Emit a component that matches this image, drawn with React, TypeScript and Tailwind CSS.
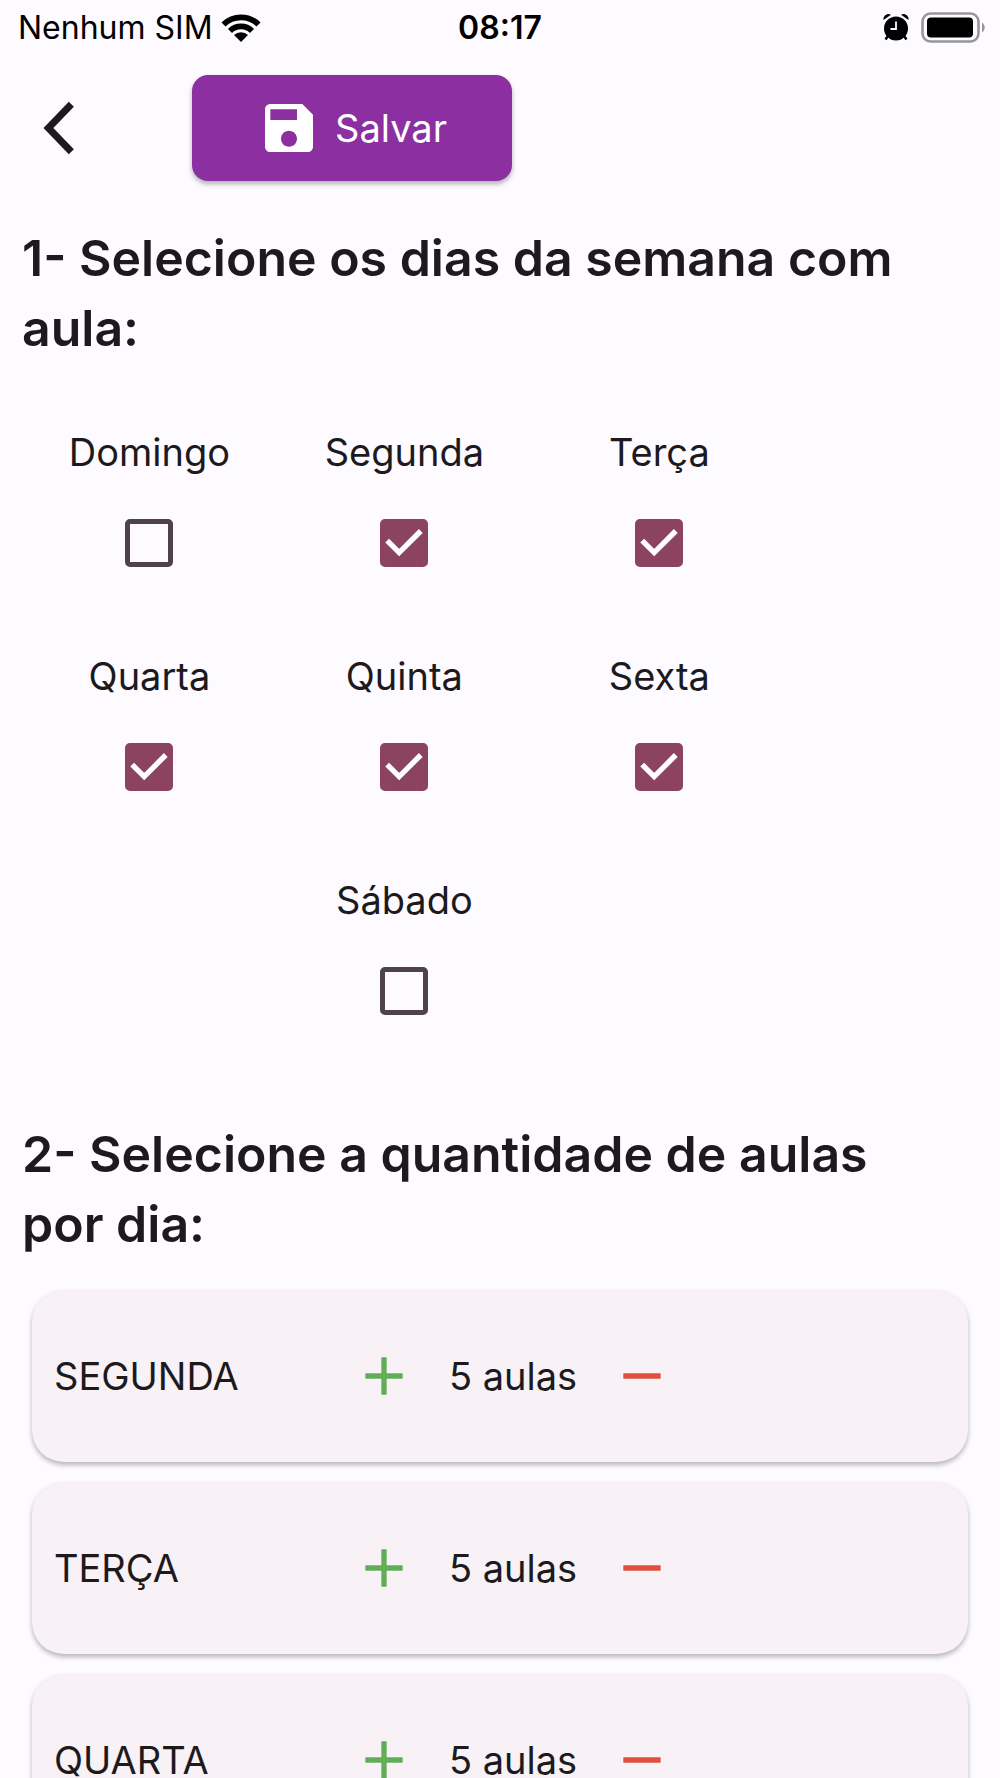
import React, { useState } from "react";

interface Day {
  name: string;
  selected: boolean;
  classes: number;
}

const initialDays: Day[] = [
  { name: "Domingo", selected: false, classes: 5 },
  { name: "Segunda", selected: true, classes: 5 },
  { name: "Terça", selected: true, classes: 5 },
  { name: "Quarta", selected: true, classes: 5 },
  { name: "Quinta", selected: true, classes: 5 },
  { name: "Sexta", selected: true, classes: 5 },
  { name: "Sábado", selected: false, classes: 5 },
];

export default function App() {
  const [days, setDays] = useState(initialDays);

  const update = (name: string, patch: Partial<Day>) =>
    setDays(days.map((d) => (d.name === name ? { ...d, ...patch } : d)));

  return (
    <div className="flex h-screen flex-col overflow-hidden bg-[#fdfbff] font-['Inter',sans-serif] text-[#1c1a1c]">
      <StatusBar />

      <header className="flex items-center gap-[100px] px-7 pt-[22px] pb-[22px]">
        <button type="button" aria-label="Voltar" className="h-16 w-16">
          <svg viewBox="0 0 24 24" className="h-16 w-16" fill="currentColor">
            <path d="M17.2 4 15.3 2.2 5.8 12l9.5 9.8 1.9-1.8L9.5 12z" />
          </svg>
        </button>
        <button
          type="button"
          className="flex h-[106px] w-80 items-center justify-center gap-3.5 rounded-2xl bg-[#8c2fa1] text-[38px] text-white shadow-[0_3px_5px_rgba(0,0,0,0.3)]"
        >
          <svg viewBox="0 0 24 24" className="h-16 w-16" fill="currentColor">
            <path d="M17 3H5c-1.11 0-2 .9-2 2v14c0 1.1.89 2 2 2h14c1.1 0 2-.9 2-2V7l-4-4zm-5 16c-1.66 0-3-1.34-3-3s1.34-3 3-3 3 1.34 3 3-1.34 3-3 3zm3-10H5V5h10v4z" />
          </svg>
          Salvar
        </button>
      </header>

      <main className="flex-1 overflow-y-auto px-[22px] pt-5 [scrollbar-width:none]">
        <SectionTitle>1- Selecione os dias da semana com aula:</SectionTitle>

        <div className="grid w-4/5 grid-cols-3 pt-12">
          {days.map((day) => (
            <DayCheckbox
              key={day.name}
              day={day}
              onToggle={() => update(day.name, { selected: !day.selected })}
            />
          ))}
        </div>

        <div className="pt-9">
          <SectionTitle>2- Selecione a quantidade de aulas por dia:</SectionTitle>
        </div>

        <ul className="flex flex-col gap-5 px-2.5 pt-[31px] pb-8">
          {days
            .filter((day) => day.selected)
            .map((day) => (
              <ClassCounter
                key={day.name}
                day={day}
                onChange={(classes) => update(day.name, { classes })}
              />
            ))}
        </ul>
      </main>
    </div>
  );
}

function SectionTitle({ children }: { children: React.ReactNode }) {
  return <h2 className="pr-8 text-[50px] leading-[70px] font-semibold">{children}</h2>;
}

function DayCheckbox({ day, onToggle }: { day: Day; onToggle: () => void }) {
  return (
    // the last day sits alone in the middle column
    <label className="flex h-56 flex-col items-center gap-11 pt-[18px] last:col-start-2">
      <span className="text-[38px] leading-[46px]">{day.name}</span>
      <span className="grid">
        <input
          type="checkbox"
          checked={day.selected}
          onChange={onToggle}
          className="peer col-start-1 row-start-1 h-12 w-12 appearance-none rounded-[5px] border-[5px] border-[#4f4348] checked:border-[#8c435f] checked:bg-[#8c435f]"
        />
        <svg
          viewBox="0 0 18 18"
          className="pointer-events-none invisible col-start-1 row-start-1 h-12 w-12 peer-checked:visible"
          fill="none"
          stroke="white"
          strokeWidth="2"
        >
          <path d="M2.7 8.1 7.2 12.6 15.3 4.5" />
        </svg>
      </span>
    </label>
  );
}

function ClassCounter({ day, onChange }: { day: Day; onChange: (classes: number) => void }) {
  return (
    <li className="flex h-[172px] shrink-0 items-center rounded-[32px] bg-[#f8f1f6] px-[22px] text-[38px] shadow-[0_3px_5px_rgba(0,0,0,0.28)]">
      <span className="w-[298px] uppercase">{day.name}</span>
      <button
        type="button"
        aria-label={`Adicionar aula: ${day.name}`}
        onClick={() => onChange(day.classes + 1)}
        className="h-16 w-16 text-[#62ae58]"
      >
        <svg viewBox="0 0 24 24" className="h-16 w-16" fill="currentColor">
          <path d="M19 13h-6v6h-2v-6H5v-2h6V5h2v6h6z" />
        </svg>
      </button>
      <span className="w-[194px] text-center">{day.classes} aulas</span>
      <button
        type="button"
        aria-label={`Remover aula: ${day.name}`}
        onClick={() => onChange(Math.max(0, day.classes - 1))}
        className="h-16 w-16 text-[#e0503c]"
      >
        <svg viewBox="0 0 24 24" className="h-16 w-16" fill="currentColor">
          <path d="M19 13H5v-2h14z" />
        </svg>
      </button>
    </li>
  );
}

function StatusBar() {
  return (
    <div className="grid h-[53px] shrink-0 grid-cols-[1fr_auto_1fr] items-center px-[14px] text-[32px] leading-[55px] text-black">
      <div className="flex items-center gap-2 pl-1">
        <span>Nenhum SIM</span>
        <svg viewBox="0 0 40 28" className="h-7 w-10">
          <path
            d="M2.5 10.5A25 25 0 0 1 37.5 10.5M9 17A15.6 15.6 0 0 1 31 17"
            fill="none"
            stroke="currentColor"
            strokeWidth="5.8"
          />
          <path d="M20 28 13 21A10 10 0 0 1 27 21Z" />
        </svg>
      </div>
      <span className="font-semibold">08:17</span>
      <div className="flex items-center justify-end gap-3">
        <svg viewBox="0 0 26 27" className="h-[27px] w-[26px]">
          <circle cx="13" cy="14.5" r="12" />
          <path d="M.5 6A5 5 0 0 1 8 .8zM25.5 6A5 5 0 0 0 18 .8z" />
          <path d="M5 22 2.5 25.5M21 22l2.5 3.5" stroke="currentColor" strokeWidth="2.5" />
          <path d="M13 7.5V15H7.5" fill="none" stroke="#fdfbff" strokeWidth="1.8" />
        </svg>
        <svg viewBox="0 0 65 31" className="h-[31px] w-[65px]">
          <rect x="1.5" y="1.5" width="56" height="28" rx="8" fill="none" stroke="#98969a" strokeWidth="2.6" />
          <rect x="6" y="5.5" width="46" height="20" rx="4" />
          <path d="M61 10.5a6 6 0 0 1 0 10z" fill="#98969a" />
        </svg>
      </div>
    </div>
  );
}
